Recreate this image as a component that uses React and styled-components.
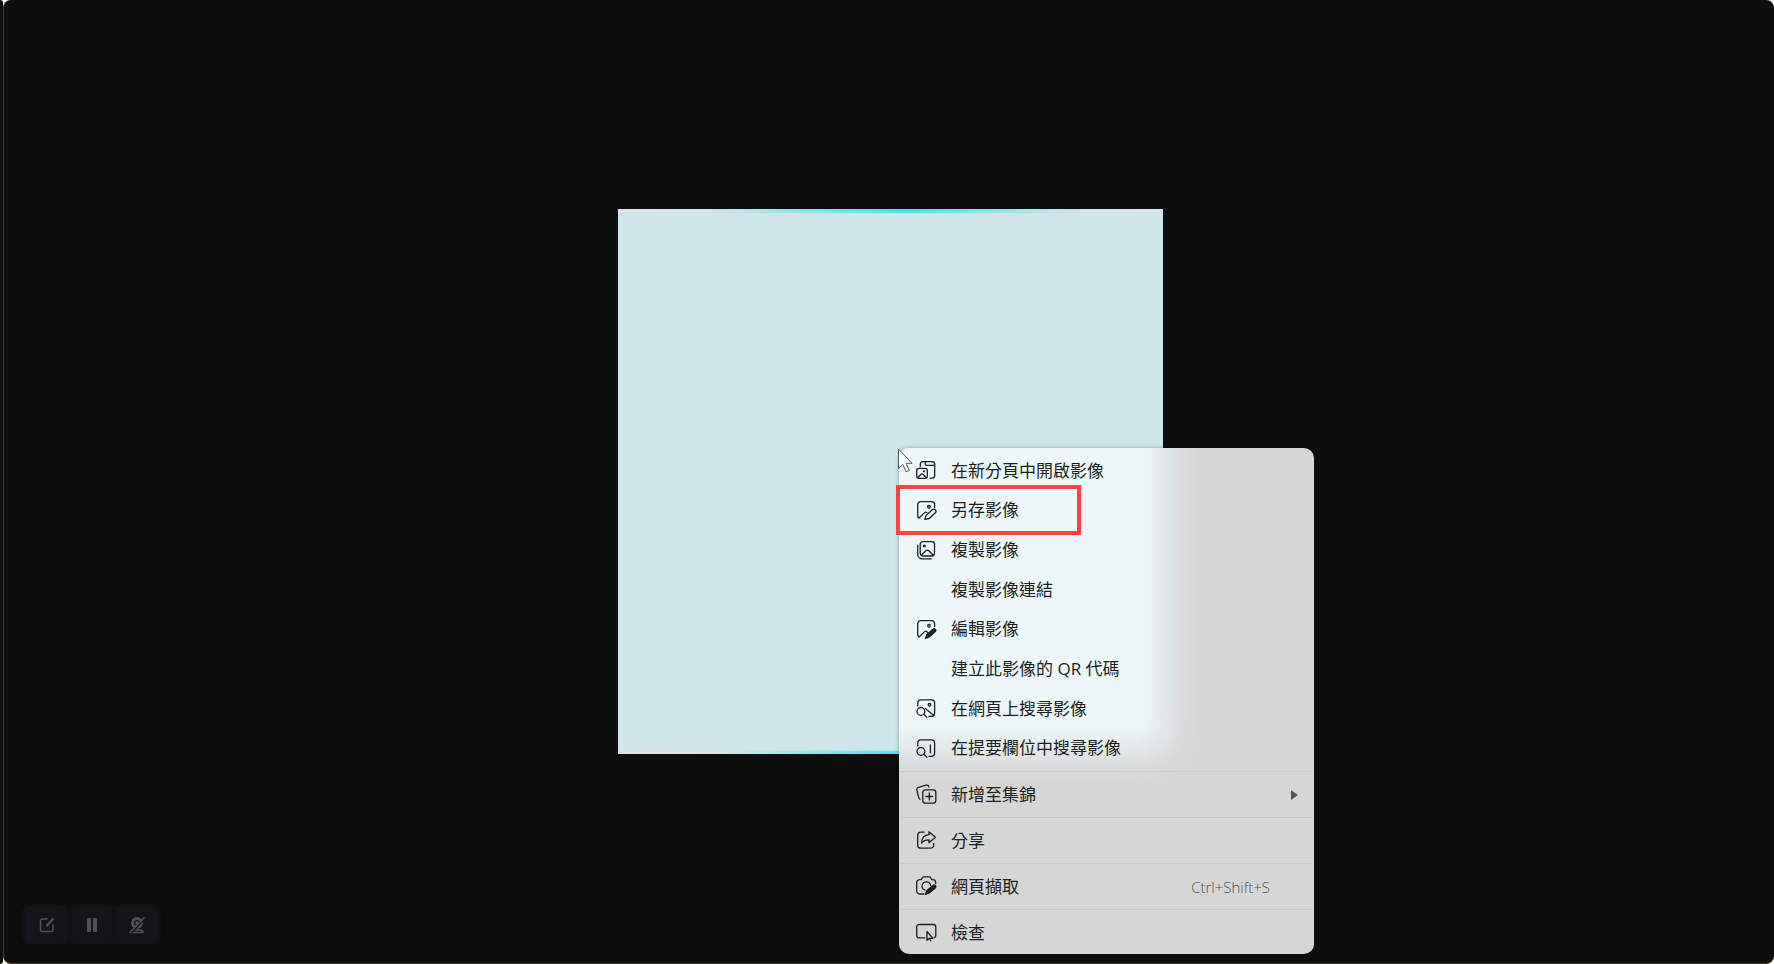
import React from "react";
import styled, { createGlobalStyle } from "styled-components";

const GlobalStyle = createGlobalStyle`
  * { box-sizing: border-box; }
  body {
    margin: 0;
    background: #fdf8ec;
    font-family: "Open Sans", "Noto Sans CJK TC", sans-serif;
  }
  button { font: inherit; color: inherit; border: 0; background: none; padding: 0; }
`;

const Page = styled.div`
  display: flex;
  min-height: 100vh;
`;

const Gutter = styled.div`
  width: 3px;
  background: #0e0e0e;
  border-radius: 0 4px 4px 0;
`;

const Stage = styled.main`
  position: relative;
  flex: 1;
  display: flex;
  align-items: center;
  justify-content: center;
  padding-left: 3px;
  background: #0e0e0e;
  border-left: 1px solid #503b08;
  border-bottom: 1px solid #503b1a;
  border-radius: 8px;
`;

const Picture = styled.div`
  position: relative;
  display: flex;
  flex-direction: column;
  justify-content: space-between;
  width: 545px;
  height: 545px;
  background: #cfe6ea;
`;

const Glint = styled.div`
  height: ${(p) => (p.$bottom ? 4 : 5)}px;
  background: ${(p) =>
    p.$bottom
      ? "linear-gradient(90deg, #e8dfe2 0%, #e4e0e3 14%, #c3e5e9 24%, #4fe5ec 50%, #c3e5e9 78%, #e8dfe2 100%)"
      : "linear-gradient(90deg, #dfe0e4 0%, #d2e3e7 18%, #86e5ea 34%, #40e3ec 53%, #86e5ea 68%, #d2e3e7 84%, #dfe0e4 100%)"};
  mask-image: linear-gradient(${(p) => (p.$bottom ? "0deg" : "180deg")}, #000 60%, transparent);
`;

const Menu = styled.div`
  position: absolute;
  left: 281px;
  top: 239px;
  width: 415px;
  padding: 3px 2px 2px;
  border-radius: 10px;
  background: #d6d6d6;
  box-shadow: 0 0 4px rgba(0, 0, 0, 0.3);
  color: #1c1f20;
  font-size: 17px;
`;

const GlowClip = styled.div`
  position: absolute;
  inset: 0;
  overflow: hidden;
  border-radius: 10px;
`;

const Glow = styled.div`
  width: 328px;
  height: 364px;
  margin: -60px 0 0 -60px;
  background: #edf7f9;
  filter: blur(17px);
`;

const Group = styled.div`
  position: relative;
  display: flex;
  flex-direction: column;
  ${(p) => p.$tall && "height: 317px;"}
  & + & {
    margin-top: 3px;
    padding-top: 3px;
    border-top: 1px solid ${(p) => (p.$faint ? "#d2d2d2" : "#c9c9c9")};
  }
`;

const Item = styled.button`
  position: relative;
  flex: 1 0 39px;
  display: flex;
  align-items: center;
  gap: 14px;
  padding: 0 14px 0 15px;
  text-align: left;
`;

const IconSlot = styled.span`
  width: 21px;
  height: 21px;
  svg { display: block; }
`;

const Label = styled.span`
  flex: 1;
  line-height: 24px;
  white-space: nowrap;
`;

const Shortcut = styled.span`
  margin-right: 28px;
  font-size: 15px;
  font-weight: 300;
  color: #505050;
`;

const Highlight = styled.span`
  position: absolute;
  left: -5px;
  top: -6px;
  width: 185px;
  height: 50px;
  border: 4px solid #fc4144;
`;

const Pointer = styled.svg`
  position: absolute;
  left: 279px;
  top: 239px;
`;

const Toolbar = styled.div`
  position: absolute;
  left: 18px;
  bottom: 19px;
  display: flex;
  gap: 4px;
  padding: 0 4px;
  border-radius: 8px;
  background: #101114;
  box-shadow: 0 0 4px #101218;
`;

const Tool = styled.button`
  display: flex;
  align-items: center;
  justify-content: center;
  width: 41px;
  height: 38px;
  border-radius: 5px;
  background: #121418;
  color: #505153;
`;

const mountain = <path d="M3.5 17.5 8.6 12.6a1.6 1.6 0 0 1 2.2 0l1.5 1.4" />;
const frameOpen = <path d="M3 18.1a3 3 0 0 1-1.3-2.5V4.7a3 3 0 0 1 3-3h10.9a3 3 0 0 1 3 3v3" />;

const drawings = {
  newTab: (
    <>
      <path d="M4.3 6.5V4.2a2.6 2.6 0 0 1 2.6-2.6h9a2.8 2.8 0 0 1 2.8 2.8v11a2.8 2.8 0 0 1-2.8 2.8H14" />
      <path d="M9.2 1.8v2a1.6 1.6 0 0 0 1.6 1.6h7.7" />
      <rect x="0.7" y="8.3" width="10.6" height="10" rx="2.4" />
      <path d="m2.2 17.2 2.9-3a1.2 1.2 0 0 1 1.8 0l2.9 3" />
      <circle cx="8" cy="11.3" r="0.5" />
    </>
  ),
  saveImage: (
    <>
      {frameOpen}
      <path d="M3.5 17.5 8.6 12.6a1.6 1.6 0 0 1 2.2 0" />
      <circle cx="13" cy="6.8" r="1.3" />
      <path d="m8.800 19.400 1.200-4 6.300-5.700a2.200 2.200 0 0 1 3.100 3.100l-6.200 5.700Z" />
    </>
  ),
  copyImage: (
    <>
      <rect x="4.2" y="1.7" width="14.3" height="14.3" rx="2.8" />
      <path d="M1.7 5.2v9.1a4.5 4.5 0 0 0 4.5 4.5h9" />
      <path d="m5.7 14.8 4.2-4a2 2 0 0 1 2.8 0l4.2 4" />
      <circle cx="8.3" cy="6" r="0.9" />
    </>
  ),
  editImage: (
    <>
      {frameOpen}
      {mountain}
      <circle cx="13" cy="6.8" r="1.3" />
      <path d="m9.5 19.4 1.2-3.7 6.2-5.5a1.7 1.7 0 0 1 2.4 2.4L13.2 18l-3.7 1.4Z" fill="currentColor" />
    </>
  ),
  searchWeb: (
    <>
      <path d="M1.8 8V4.9a3 3 0 0 1 3-3h10.8a3 3 0 0 1 3 3v10.4a3 3 0 0 1-3 3H13" />
      <circle cx="4.9" cy="13.4" r="3.9" />
      <path d="m7.8 16.3 3.1 3.1M9.3 10.5l8.3 6.8" />
      <circle cx="13.5" cy="6.8" r="1.3" />
    </>
  ),
  searchSide: (
    <>
      <path d="M1.8 8V4.9a3 3 0 0 1 3-3h10.8a3 3 0 0 1 3 3v10.4a3 3 0 0 1-3 3H13" />
      <circle cx="4.9" cy="13.4" r="3.9" />
      <path d="m7.8 16.3 3.1 3.1M14.4 6.8v8" />
    </>
  ),
  collection: (
    <>
      <rect x="6.8" y="5.8" width="13" height="13.4" rx="2.8" />
      <path d="M13.3 9v7M9.8 12.5h7M4 15.2a3 3 0 0 1-1.4-2L.9 6A2.3 2.3 0 0 1 2.6 3.3L10 1.2A2.3 2.3 0 0 1 12.9 2.9" />
    </>
  ),
  share: (
    <>
      <path d="M8 2.2H4.7a3 3 0 0 0-3 3v10a3 3 0 0 0 3 3h10a3 3 0 0 0 3-3v-1.7" />
      <path d="M13 1.7 19.4 7.3 13 12.8V9.8c-3.5 0-5.7 1-7.5 3.2.3-4.4 2.7-8 7.5-8.3Z" />
    </>
  ),
  capture: (
    <>
      <path d="M8 18H3.7a3 3 0 0 1-3-3V6.7a3 3 0 0 1 3-3h1.6l1-1.9a2 2 0 0 1 1.7-1h5a2 2 0 0 1 1.7 1l1 1.9h1a3 3 0 0 1 3 3v1" />
      <path d="M9 14.200a4.300 4.300 0 1 1 5.600-4.900" />
      <path d="m9.5 18.4 1.2-3.6 6.2-5.3a1.7 1.7 0 0 1 2.4 2.4L13.2 17l-3.7 1.4Z" fill="currentColor" />
    </>
  ),
  inspect: (
    <>
      <path d="M8.8 15.9H3.2A2.5 2.5 0 0 1 .7 13.4V5a2.5 2.5 0 0 1 2.5-2.5h14.1A2.5 2.5 0 0 1 19.8 5v8.4a2.5 2.5 0 0 1-1.5 2.3" />
      <path d="M11 9.500v8.800l2.200-2h3.700Z" />
      <path d="m13.500 16.500 1.200 2.300" />
    </>
  ),
};

function MenuIcon({ name }) {
  return (
    <svg width="21" height="21" viewBox="0 0 21 21" fill="none" stroke="currentColor" strokeWidth="1.3" strokeLinecap="round" strokeLinejoin="round">
      {drawings[name]}
    </svg>
  );
}

const groups = [
  [
    { icon: "newTab", label: "在新分頁中開啟影像" },
    { icon: "saveImage", label: "另存影像", marked: true },
    { icon: "copyImage", label: "複製影像" },
    { label: "複製影像連結" },
    { icon: "editImage", label: "編輯影像" },
    { label: "建立此影像的 QR 代碼" },
    { icon: "searchWeb", label: "在網頁上搜尋影像" },
    { icon: "searchSide", label: "在提要欄位中搜尋影像" },
  ],
  [{ icon: "collection", label: "新增至集錦", submenu: true }],
  [{ icon: "share", label: "分享" }],
  [{ icon: "capture", label: "網頁擷取", shortcut: "Ctrl+Shift+S" }],
  [{ icon: "inspect", label: "檢查" }],
];

function MenuItem({ icon, label, marked, submenu, shortcut }) {
  return (
    <Item type="button" role="menuitem">
      <IconSlot>{icon && <MenuIcon name={icon} />}</IconSlot>
      <Label>{label}</Label>
      {shortcut && <Shortcut>{shortcut}</Shortcut>}
      {submenu && (
        <svg width="7" height="10" viewBox="0 0 7 10" aria-hidden="true">
          <path d="M0 0v10l7-5z" fill="#555" />
        </svg>
      )}
      {marked && <Highlight />}
    </Item>
  );
}

export default function App() {
  return (
    <Page>
      <GlobalStyle />
      <Gutter />
      <Stage>
        <Picture>
          <Glint />
          <Glint $bottom />
          <Menu role="menu">
            <GlowClip>
              <Glow />
            </GlowClip>
            {groups.map((items, i) => (
              <Group key={i} $tall={items.length > 1} $faint={i === 1 || i === 3}>
                {items.map((item) => (
                  <MenuItem key={item.label} {...item} />
                ))}
              </Group>
            ))}
          </Menu>
          <Pointer width="18" height="26" viewBox="0 0 18 26" aria-hidden="true">
            <path d="M1.5 1v19.5l4.3-4 3.2 7.3 3.3-1.4-3.2-7.1h5.9Z" fill="#f8fbfc" stroke="#555b5e" strokeWidth="1" />
          </Pointer>
        </Picture>
        <Toolbar>
          <Tool type="button" aria-label="Edit">
            <svg width="16" height="16" viewBox="0 0 16 16" fill="none" stroke="currentColor" strokeWidth="1.5" strokeLinecap="round">
              <path d="M8 2H3.5A2 2 0 0 0 1.5 4v8.5a2 2 0 0 0 2 2H12a2 2 0 0 0 2-2V8" />
              <path d="m8 8.5 6-6.5" strokeWidth="2.2" />
            </svg>
          </Tool>
          <Tool type="button" aria-label="Pause">
            <svg width="12" height="16" viewBox="0 0 12 16" fill="currentColor">
              <rect x="1" y="1" width="4" height="14" rx="1" />
              <rect x="7" y="1" width="4" height="14" rx="1" />
            </svg>
          </Tool>
          <Tool type="button" aria-label="Camera off">
            <svg width="18" height="18" viewBox="0 0 18 18" fill="none" stroke="currentColor">
              <circle cx="9" cy="7" r="4.5" strokeWidth="3" />
              <circle cx="9" cy="7" r="1.2" fill="currentColor" />
              <path d="M3 16.5c0-1.500 1-2.500 2.500-2.500h7c1.500 0 2.500 1 2.500 2.500Z" strokeWidth="1.3" />
              <path d="M2.500 18 18 1.500" stroke="#121418" strokeWidth="1.300" />
              <path d="M1.5 17 16.5 1.2" strokeWidth="1.4" />
            </svg>
          </Tool>
        </Toolbar>
      </Stage>
    </Page>
  );
}
